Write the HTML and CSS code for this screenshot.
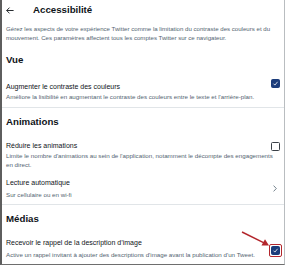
FILE: index.html
```html
<!DOCTYPE html>
<html lang="fr">
<head>
<meta charset="utf-8">
<link rel="stylesheet" href="styles.css">
</head>
<body>
<div class="frame">
  <header class="top">
    <svg class="back" width="8" height="7" viewBox="0 0 8 7"><path d="M3.5 0.6 L0.7 3.5 L3.5 6.4 M0.7 3.5 H7.6" fill="none" stroke="#0f1419" stroke-width="0.9"/></svg>
    <h1 class="title">Accessibilité</h1>
  </header>
  <p class="intro">Gérez les aspects de votre expérience Twitter comme la limitation du contraste des couleurs et du mouvement. Ces paramètres affectent tous les comptes Twitter sur ce navigateur.</p>

  <h2 class="section s-vue">Vue</h2>
  <div class="row r-contrast">
    <div class="line">
      <span class="label">Augmenter le contraste des couleurs</span>
      <span class="box checked up"><svg width="7" height="7" viewBox="0 0 7 7"><path d="M1.5 3.7 L2.9 5.1 L5.6 1.8" fill="none" stroke="#fff" stroke-width="0.8"/></svg></span>
    </div>
    <div class="sub">Améliore la lisibilité en augmentant le contraste des couleurs entre le texte et l'arrière-plan.</div>
  </div>
  <div class="divider"></div>

  <h2 class="section s-anim">Animations</h2>
  <div class="row r-reduce">
    <div class="line">
      <span class="label">Réduire les animations</span>
      <span class="box"></span>
    </div>
    <div class="sub">Limite le nombre d'animations au sein de l'application, notamment le décompte des engagements en direct.</div>
  </div>
  <div class="row nav">
    <div class="text">
      <div class="label">Lecture automatique</div>
      <div class="sub gap">Sur cellulaire ou en wi-fi</div>
    </div>
    <svg class="chev" width="4" height="7" viewBox="0 0 4 7"><path d="M0.6 0.6 L3.3 3.5 L0.6 6.4" fill="none" stroke="#536471" stroke-width="0.8"/></svg>
  </div>
  <div class="divider d2"></div>

  <h2 class="section s-media">Médias</h2>
  <div class="row r-media">
    <div class="line">
      <span class="label">Recevoir le rappel de la description d’image</span>
      <span class="mark"><span class="box checked"><svg width="7" height="7" viewBox="0 0 7 7"><path d="M1.5 3.7 L2.9 5.1 L5.6 1.8" fill="none" stroke="#fff" stroke-width="0.8"/></svg></span></span>
    </div>
    <div class="sub gap">Active un rappel invitant à ajouter des descriptions d'image avant la publication d'un Tweet.</div>
  </div>
  <svg class="arrow" width="30" height="18" viewBox="0 0 30 18"><path d="M1 1 L23 11.8" stroke="#b3262c" stroke-width="1.4" fill="none"/><path d="M28 14.5 L20.5 14.6 L24 8.2 Z" fill="#b3262c"/></svg>
</div>
</body>
</html>
```
FILE: styles.css
```css
* { box-sizing: border-box; margin: 0; padding: 0; }
html, body { width: 288px; height: 266px; background: #fff; overflow: hidden; }
body { font-family: "Liberation Sans", Arial, sans-serif; color: #0f1419; }
.frame {
  position: relative;
  width: 285px;
  height: 265px;
  border-left: 2px solid #5e5e5e;
  border-right: 1px solid #b9bdc0;
  border-bottom: 1px solid #6e6e6e;
}
.top { display: flex; align-items: center; height: 19px; padding-left: 4px; }
.back { margin-right: 19px; margin-top: 2px; }
.title { font-size: 9.7px; font-weight: 700; line-height: 12px; }
.intro { font-size: 6.1px; line-height: 9px; color: #536471; padding: 0 1px 0 4px; margin-top: 5px; }
.section { font-size: 9.7px; font-weight: 700; line-height: 14px; padding-left: 4px; }
.s-vue { margin-top: 11px; }
.s-anim { margin-top: 7px; }
.s-media { margin-top: 7px; }
.row { padding: 0 4px 0 4px; }
.r-contrast { padding-top: 15px; }
.r-reduce { padding-top: 12px; }
.nav { display: flex; align-items: center; padding-top: 9px; padding-right: 7px; }
.nav .text { flex: 1; }
.r-media { padding-top: 12px; }
.line { display: flex; justify-content: space-between; align-items: center; height: 10px; }
.label { font-size: 7px; line-height: 10px; white-space: nowrap; }
.sub { font-size: 6.2px; line-height: 9px; color: #536471; }
.sub.gap { margin-top: 2px; }
.box {
  flex: none;
  display: inline-flex; align-items: center; justify-content: center;
  width: 9px; height: 9px; border: 1.1px solid #3b4148; border-radius: 1.5px;
}
.box.checked { background: #1b3c7a; border-color: #1b3c7a; }
.box.up { align-self: flex-start; margin-top: -3px; }
.divider { height: 1px; background: #e1e5e8; margin-top: 6px; }
.divider.d2 { margin-top: 5px; }
.mark {
  flex: none; align-self: flex-start; margin-top: 6px; margin-right: -2px;
  display: inline-flex; padding: 1px; border: 1.4px solid #b3262c; border-radius: 2px;
}
.arrow { position: absolute; left: 239px; top: 231px; }
```
